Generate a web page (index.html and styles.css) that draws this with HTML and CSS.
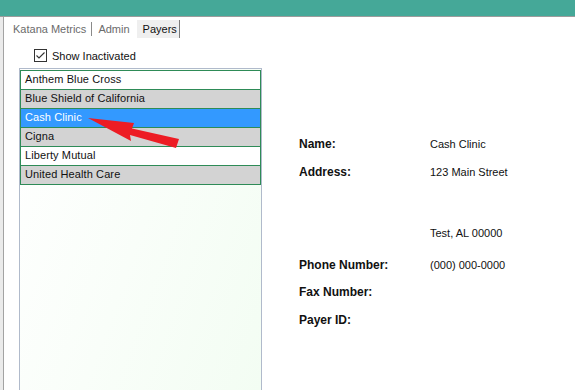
FILE: index.html
```html
<!DOCTYPE html>
<html lang="en">
<head>
    <meta charset="UTF-8">
    <meta name="viewport" content="width=device-width, initial-scale=1.0">
    <title>Payers</title>
    <link rel="stylesheet" href="styles.css">
</head>
<body>
    <div class="titlebar"></div>
    <div class="window">
        <div class="rail"></div>
        <div class="content">
            <div class="tabs">
                <span class="tab">Katana Metrics</span>
                <span class="tab-divider"></span>
                <span class="tab">Admin</span>
                <span class="tab active">Payers</span>
            </div>

            <label class="toggle">
                <svg class="checkbox" width="13" height="13" viewBox="0 0 13 13">
                    <rect x="0.5" y="0.5" width="12" height="12" fill="#fff" stroke="#333"/>
                    <polyline points="2.5,6.5 5,9 10.5,3.5" fill="none" stroke="#333" stroke-width="1.1"/>
                </svg>
                <span>Show Inactivated</span>
            </label>

            <div class="panes">
                <div class="payer-list">
                    <div class="payer-rows">
                        <div class="payer">Anthem Blue Cross</div>
                        <div class="payer alt">Blue Shield of California</div>
                        <div class="payer selected">Cash Clinic</div>
                        <div class="payer alt">Cigna</div>
                        <div class="payer">Liberty Mutual</div>
                        <div class="payer alt">United Health Care</div>
                    </div>
                </div>

                <div class="details">
                    <div class="label">Name:</div>
                    <div class="value">Cash Clinic</div>

                    <div class="label">Address:</div>
                    <div class="value address">
                        <span>123 Main Street</span>
                        <span>Test, AL 00000</span>
                    </div>

                    <div class="label">Phone Number:</div>
                    <div class="value">(000) 000-0000</div>

                    <div class="label">Fax Number:</div>
                    <div class="value"></div>

                    <div class="label">Payer ID:</div>
                    <div class="value"></div>
                </div>
            </div>
        </div>
    </div>

    <!-- annotation arrow drawn over the screenshot -->
    <svg class="arrow" width="575" height="390" viewBox="0 0 575 390">
        <polygon points="88,118 134,123 132,128.5 179,139 176,148 130,135 131,141" fill="#ed1c24"/>
    </svg>
</body>
</html>
```

FILE: styles.css
```css
body {
    margin: 0;
    width: 575px;
    height: 390px;
    overflow: hidden;
    background: #fff;
    font-family: 'Liberation Sans', Arial, sans-serif;
    font-size: 11px;
    color: #111;
    position: relative;
}

.titlebar {
    height: 16px;
    background: #45a898;
    border-bottom: 1px solid #9c9c9c;
}

.window {
    display: flex;
    height: 373px;
}

.rail {
    width: 3px;
    background: #ebebeb;
    border-right: 1px solid #a3a3a3;
}

.content {
    flex: 1;
    display: flex;
    flex-direction: column;
}

/* tab strip */
.tabs {
    display: flex;
    align-items: center;
    margin: 3px 0 0 9px;
    height: 18px;
}

.tab {
    line-height: 18px;
    color: #6b6b6b;
}

.tab-divider {
    width: 1px;
    height: 14px;
    background: #8a8a8a;
    margin: 0 6px 0 5px;
}

.tab.active {
    margin-left: 7px;
    padding: 0 2px 0 6px;
    background: #efefef;
    color: #111;
    border-right: 1px solid #7a7a7a;
}

/* show inactivated */
.toggle {
    display: flex;
    align-items: center;
    margin: 11px 0 0 30px;
    height: 13px;
}

.toggle span {
    margin-left: 5px;
}

/* list + details */
.panes {
    flex: 1;
    display: flex;
    margin-top: 6px;
}

.payer-list {
    width: 241px;
    margin-left: 15px;
    padding-top: 1px;
    border: 1px solid #b0bacb;
    border-bottom: none;
    background: linear-gradient(110deg, #ffffff 0%, #f3fdf3 100%);
}

.payer-rows {
    border: 1px solid #2e8b57;
    background: #fff;
}

.payer {
    height: 18px;
    box-sizing: border-box;
    padding: 1px 0 3px 4px;
    line-height: 14px;
    letter-spacing: 0.1px;
    border-top: 1px solid #2e8b57;
    white-space: nowrap;
}

.payer:first-child {
    border-top: none;
}

.payer.alt {
    background: #d3d3d3;
}

.payer.selected {
    background: #3399ff;
    color: #fff;
}

.payer + .payer {
    height: 19px;
}

.details {
    display: grid;
    grid-template-columns: 131px auto;
    grid-template-rows: 28px 93px 27px 28px 14px;
    margin-left: 37px;
    padding-top: 69px;
    align-content: start;
}

.label {
    font-size: 12px;
    font-weight: bold;
    line-height: 14px;
}

.value {
    line-height: 14px;
}

.value.address {
    display: flex;
    flex-direction: column;
    gap: 47px;
}

.arrow {
    position: absolute;
    left: 0;
    top: 0;
    pointer-events: none;
}
```
